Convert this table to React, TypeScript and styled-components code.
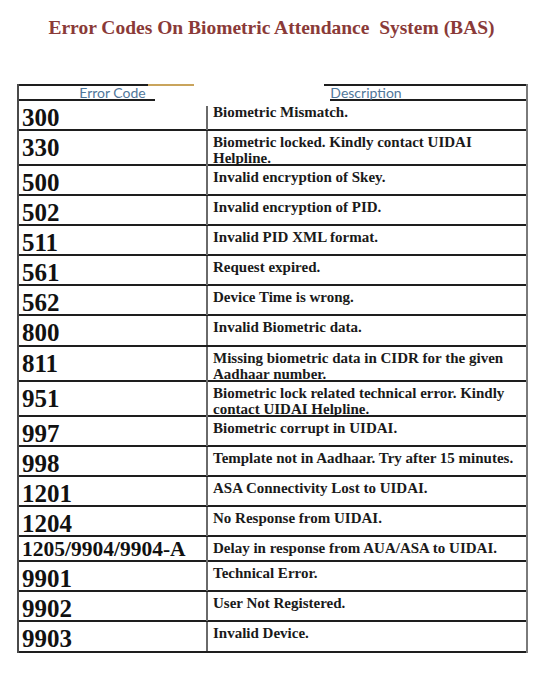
import { FC } from "react";
import styled, { createGlobalStyle } from "styled-components";

type ErrorRow = {
  code: string;
  lines: string[];
  height: number;
  small?: boolean;
  gap?: number;
};

const rows: ErrorRow[] = [
  { code: "300", lines: ["Biometric Mismatch."], height: 30, gap: 5 },
  {
    code: "330",
    lines: ["Biometric locked. Kindly contact UIDAI", "Helpline."],
    height: 35,
  },
  { code: "500", lines: ["Invalid encryption of Skey."], height: 30 },
  { code: "502", lines: ["Invalid encryption of PID."], height: 30 },
  { code: "511", lines: ["Invalid PID XML format."], height: 30 },
  { code: "561", lines: ["Request expired."], height: 30 },
  { code: "562", lines: ["Device Time is wrong."], height: 30 },
  { code: "800", lines: ["Invalid Biometric data."], height: 31 },
  {
    code: "811",
    lines: ["Missing biometric data in CIDR for the given", "Aadhaar number."],
    height: 35,
  },
  {
    code: "951",
    lines: [
      "Biometric lock related technical error. Kindly",
      "contact UIDAI Helpline.",
    ],
    height: 35,
  },
  { code: "997", lines: ["Biometric corrupt in UIDAI."], height: 30 },
  {
    code: "998",
    lines: ["Template not in Aadhaar. Try after 15 minutes."],
    height: 30,
  },
  { code: "1201", lines: ["ASA Connectivity Lost to UIDAI."], height: 30 },
  { code: "1204", lines: ["No Response from UIDAI."], height: 30 },
  {
    code: "1205/9904/9904-A",
    lines: ["Delay in response from AUA/ASA to UIDAI."],
    height: 25,
    small: true,
  },
  { code: "9901", lines: ["Technical Error."], height: 30 },
  { code: "9902", lines: ["User Not Registered."], height: 30 },
  { code: "9903", lines: ["Invalid Device."], height: 31 },
];

const App: FC = () => {
  return (
    <Page>
      <GlobalStyle />
      <Title>Error Codes On Biometric Attendance  System (BAS)</Title>
      <Table>
        <HeadRow>
          <HeadCell $top={[0, 129]} $accent={[129, 46]} $bottom={[0, 136]}>
            Error Code
          </HeadCell>
          <HeadCell $top={[118, 202]} $bottom={[124, 196]}>
            Description
          </HeadCell>
        </HeadRow>
        {rows.map((row) => (
          <Row key={row.code} $height={row.height}>
            <Code $small={row.small}>{row.code}</Code>
            <Desc $gap={row.gap ?? 0}>
              {row.lines.map((line) => (
                <Line key={line}>{line}</Line>
              ))}
            </Desc>
          </Row>
        ))}
      </Table>
    </Page>
  );
};

export default App;

const GlobalStyle = createGlobalStyle`
  html, body {
    margin: 0;
    background: #ffffff;
  }
  * {
    box-sizing: border-box;
  }
`;

const serif = `"Liberation Serif", "Times New Roman", serif`;

const Page = styled.div`
  width: 543px;
  min-height: 673px;
  padding-top: 16px;
  font-family: ${serif};
`;

const Title = styled.h1`
  margin: 0 0 44px;
  font-family: ${serif};
  font-size: 19.5px;
  line-height: 24px;
  font-weight: bold;
  text-align: center;
  white-space: pre;
  color: #8a3a38;
`;

const Table = styled.div`
  margin-left: 17px;
  width: 511px;
  border-left: 2px solid #4a4a4a;
  border-right: 2px solid #7a7a7a;
`;

const HeadRow = styled.div`
  display: grid;
  grid-template-columns: 187px 1fr;
  height: 17px;
`;

const rule = "linear-gradient(#1e1e1e, #1e1e1e)";

const HeadCell = styled.div<{
  $top: [number, number];
  $bottom: [number, number];
  $accent?: [number, number];
}>`
  display: flex;
  align-items: center;
  justify-content: center;
  font-family: Lato, "Open Sans", sans-serif;
  font-size: 14px;
  color: #51779a;
  background-repeat: no-repeat;
  background-image: ${({ $accent }) =>
    $accent ? "linear-gradient(#c9a45c, #c9a45c), " : ""}${rule}, ${rule};
  background-size: ${({ $accent, $top, $bottom }) =>
    `${$accent ? `${$accent[1]}px 2px, ` : ""}${$top[1]}px 2px, ${
      $bottom[1]
    }px 2px`};
  background-position: ${({ $accent, $top, $bottom }) =>
    `${$accent ? `${$accent[0]}px 0, ` : ""}${$top[0]}px 0, ${
      $bottom[0]
    }px 100%`};
`;

const Row = styled.div<{ $height: number }>`
  display: grid;
  grid-template-columns: 187px 1fr;
  height: ${({ $height }) => $height}px;
  border-bottom: 2px solid #1e1e1e;
`;

const Code = styled.div<{ $small?: boolean }>`
  padding: ${({ $small }) => ($small ? "0 0 0 3px" : "4px 0 0 3px")};
  font-size: ${({ $small }) => ($small ? "21.5px" : "25px")};
  line-height: 25px;
  font-weight: bold;
  color: #111111;
  white-space: nowrap;
`;

const Desc = styled.div<{ $gap: number }>`
  padding: 3px 0 0 7px;
  background: linear-gradient(#6a6a6a, #6a6a6a) no-repeat left bottom;
  background-size: 2px ${({ $gap }) => `calc(100% - ${$gap}px)`};
  font-size: 15px;
  line-height: 16px;
  font-weight: bold;
  color: #1a1a1a;
`;

const Line = styled.div`
  white-space: nowrap;
`;
